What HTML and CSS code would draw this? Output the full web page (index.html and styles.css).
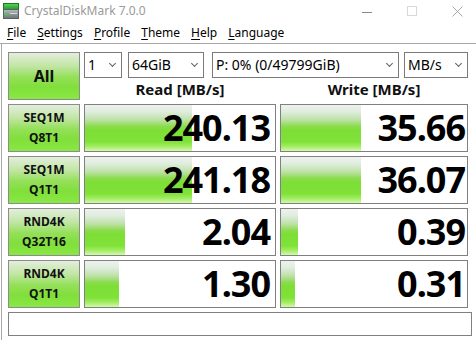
FILE: index.html
```html
<!DOCTYPE html>
<html>
<head>
<meta charset="utf-8">
<link rel="stylesheet" href="styles.css">
</head>
<body>
<div class="window">
  <div class="titlebar">
    <svg class="appicon" width="16" height="16" viewBox="0 0 16 16">
      <defs>
        <linearGradient id="g1" x1="0" y1="0" x2="0" y2="1">
          <stop offset="0" stop-color="#5fd35f"/>
          <stop offset="1" stop-color="#1f9a2a"/>
        </linearGradient>
        <linearGradient id="g2" x1="0" y1="0" x2="0" y2="1">
          <stop offset="0" stop-color="#b4bcbc"/>
          <stop offset="1" stop-color="#6c7474"/>
        </linearGradient>
      </defs>
      <rect x="0.5" y="0.5" width="15" height="6" fill="url(#g1)" stroke="#1c7a24"/>
      <rect x="0.5" y="6.5" width="15" height="9" fill="url(#g2)" stroke="#5a6262"/>
      <rect x="2" y="10" width="3" height="2" fill="#3fd04a"/>
      <rect x="7" y="10" width="7" height="1" fill="#d6dcdc"/>
    </svg>
    <span class="title">CrystalDiskMark 7.0.0</span>
    <div class="controls">
      <span class="ctl-min"></span>
      <span class="ctl-max"></span>
      <svg class="ctl-close" width="11" height="11" viewBox="0 0 11 11">
        <path d="M0.5 0.5 L10.5 10.5 M10.5 0.5 L0.5 10.5" stroke="#a8a8a8" stroke-width="1"/>
      </svg>
    </div>
  </div>
  <div class="menubar">
    <span class="menu"><u>F</u>ile</span>
    <span class="menu"><u>S</u>ettings</span>
    <span class="menu"><u>P</u>rofile</span>
    <span class="menu"><u>T</u>heme</span>
    <span class="menu"><u>H</u>elp</span>
    <span class="menu"><u>L</u>anguage</span>
  </div>
  <div class="client">
    <div class="top">
      <div class="allbtn">All</div>
      <div class="topright">
        <div class="combos">
          <div class="combo c-count"><span>1</span><i class="chev"></i></div>
          <div class="combo c-size"><span>64GiB</span><i class="chev"></i></div>
          <div class="combo c-drive"><span>P: 0% (0/49799GiB)</span><i class="chev"></i></div>
          <div class="combo c-unit"><span>MB/s</span><i class="chev"></i></div>
        </div>
        <div class="headers">
          <div class="hdr">Read [MB/s]</div>
          <div class="hdr">Write [MB/s]</div>
        </div>
      </div>
    </div>
    <div class="rows">
      <div class="label">SEQ1M<br>Q8T1</div>
      <div class="cell"><div class="fill" style="width:107px"></div><span class="num">240.13</span></div>
      <div class="cell write"><div class="fill" style="width:80px"></div><span class="num">35.66</span></div>

      <div class="label">SEQ1M<br>Q1T1</div>
      <div class="cell"><div class="fill" style="width:107px"></div><span class="num">241.18</span></div>
      <div class="cell write"><div class="fill" style="width:80px"></div><span class="num">36.07</span></div>

      <div class="label">RND4K<br>Q32T16</div>
      <div class="cell"><div class="fill" style="width:40px"></div><span class="num">2.04</span></div>
      <div class="cell write"><div class="fill" style="width:17px"></div><span class="num">0.39</span></div>

      <div class="label">RND4K<br>Q1T1</div>
      <div class="cell"><div class="fill" style="width:34px"></div><span class="num">1.30</span></div>
      <div class="cell write"><div class="fill" style="width:14px"></div><span class="num">0.31</span></div>
    </div>
    <div class="status"></div>
  </div>
</div>
</body>
</html>
```
FILE: styles.css
```css
* { box-sizing: border-box; }
html, body {
  margin: 0;
  padding: 0;
  background: #ffffff;
}
body {
  width: 476px;
  height: 340px;
  overflow: hidden;
  font-family: "Noto Sans", "Open Sans", sans-serif;
  color: #000;
}
.window {
  width: 476px;
  height: 340px;
  display: flex;
  flex-direction: column;
}
.titlebar {
  height: 22px;
  display: flex;
  align-items: center;
  padding-left: 3px;
}
.appicon { display: block; }
.title {
  margin-left: 5px;
  font-size: 12px;
  color: #9a9a9a;
  line-height: 22px;
}
.controls {
  margin-left: auto;
  display: flex;
  align-items: center;
  height: 22px;
  padding-right: 13px;
}
.ctl-min {
  width: 10px;
  height: 1px;
  background: #8a8a8a;
  margin-top: 3px;
}
.ctl-max {
  width: 10px;
  height: 10px;
  border: 1px solid #d8d8d8;
  margin-left: 35px;
}
.ctl-close {
  display: block;
  margin-left: 35px;
}
.menubar {
  height: 22px;
  display: flex;
  align-items: center;
  padding-left: 1.5px;
  border-bottom: 1px solid #a8a8a8;
  font-size: 12px;
  line-height: 21px;
}
.menu {
  padding: 0 5.5px;
  color: #000;
}
.menu u { text-decoration-thickness: 1px; text-underline-offset: 2px; }
.client {
  flex: 1;
  margin-left: 1px;
  border-left: 1px solid #a8a8a8;
  padding: 8px 0 0 6px;
}
.top {
  display: flex;
  height: 48px;
}
.allbtn {
  width: 72px;
  height: 48px;
  border: 1px solid #8c8c8c;
  background: linear-gradient(#e2eedb 0%, #c2e6a6 28%, #94e05a 52%, #80df3a 75%, #8ae846 100%);
  display: flex;
  align-items: center;
  justify-content: center;
  font-weight: 700;
  font-size: 16px;
  color: #111;
}
.topright {
  margin-left: 4px;
  width: 384px;
  display: flex;
  flex-direction: column;
}
.combos {
  display: flex;
  height: 26px;
}
.combo {
  height: 26px;
  border: 1px solid #7a7a7a;
  background: #fff;
  display: flex;
  align-items: center;
  padding-left: 3px;
  font-size: 14px;
  line-height: 24px;
  position: relative;
}
.c-count { width: 38px; }
.c-size { width: 76px; margin-left: 6px; }
.c-drive { width: 187px; margin-left: 8px; }
.c-unit { width: 64px; margin-left: 5px; }
.chev {
  position: absolute;
  right: 6px;
  top: 8px;
  width: 5px;
  height: 5px;
  border-right: 1px solid #606060;
  border-bottom: 1px solid #606060;
  transform: rotate(45deg);
}
.headers {
  display: grid;
  grid-template-columns: 192px 188px;
  column-gap: 4px;
  height: 22px;
}
.hdr {
  text-align: center;
  font-weight: 700;
  font-size: 15px;
  line-height: 22px;
  color: #111;
}
.rows {
  margin-top: 4px;
  display: grid;
  grid-template-columns: 72px 192px 188px;
  grid-auto-rows: 48px;
  gap: 4px;
}
.label {
  border: 1px solid #8c8c8c;
  background: linear-gradient(#e2eedb 0%, #c2e6a6 28%, #94e05a 52%, #80df3a 75%, #8ae846 100%);
  display: flex;
  align-items: center;
  justify-content: center;
  text-align: center;
  font-weight: 700;
  font-size: 12px;
  line-height: 20px;
  color: #111;
}
.cell {
  border: 1px solid #808080;
  background: #fff;
  position: relative;
  display: flex;
  align-items: center;
  justify-content: flex-end;
  padding-right: 5px;
}
.cell.write { padding-right: 2px; }
.fill {
  position: absolute;
  left: 0;
  top: 0;
  bottom: 0;
  background: linear-gradient(#eef2ec 0%, #e0ede0 14%, #bfe2a8 32%, #8cdc50 46%, #7ddf36 55%, #80e238 80%, #a2ec62 90%, #d4f8b0 100%);
}
.num {
  position: relative;
  font-weight: 700;
  font-size: 36px;
  letter-spacing: -1px;
  line-height: 46px;
  color: #000;
}
.status {
  margin-top: 4px;
  width: 464px;
  height: 24px;
  border: 1px solid #808080;
  background: #fff;
}
```
